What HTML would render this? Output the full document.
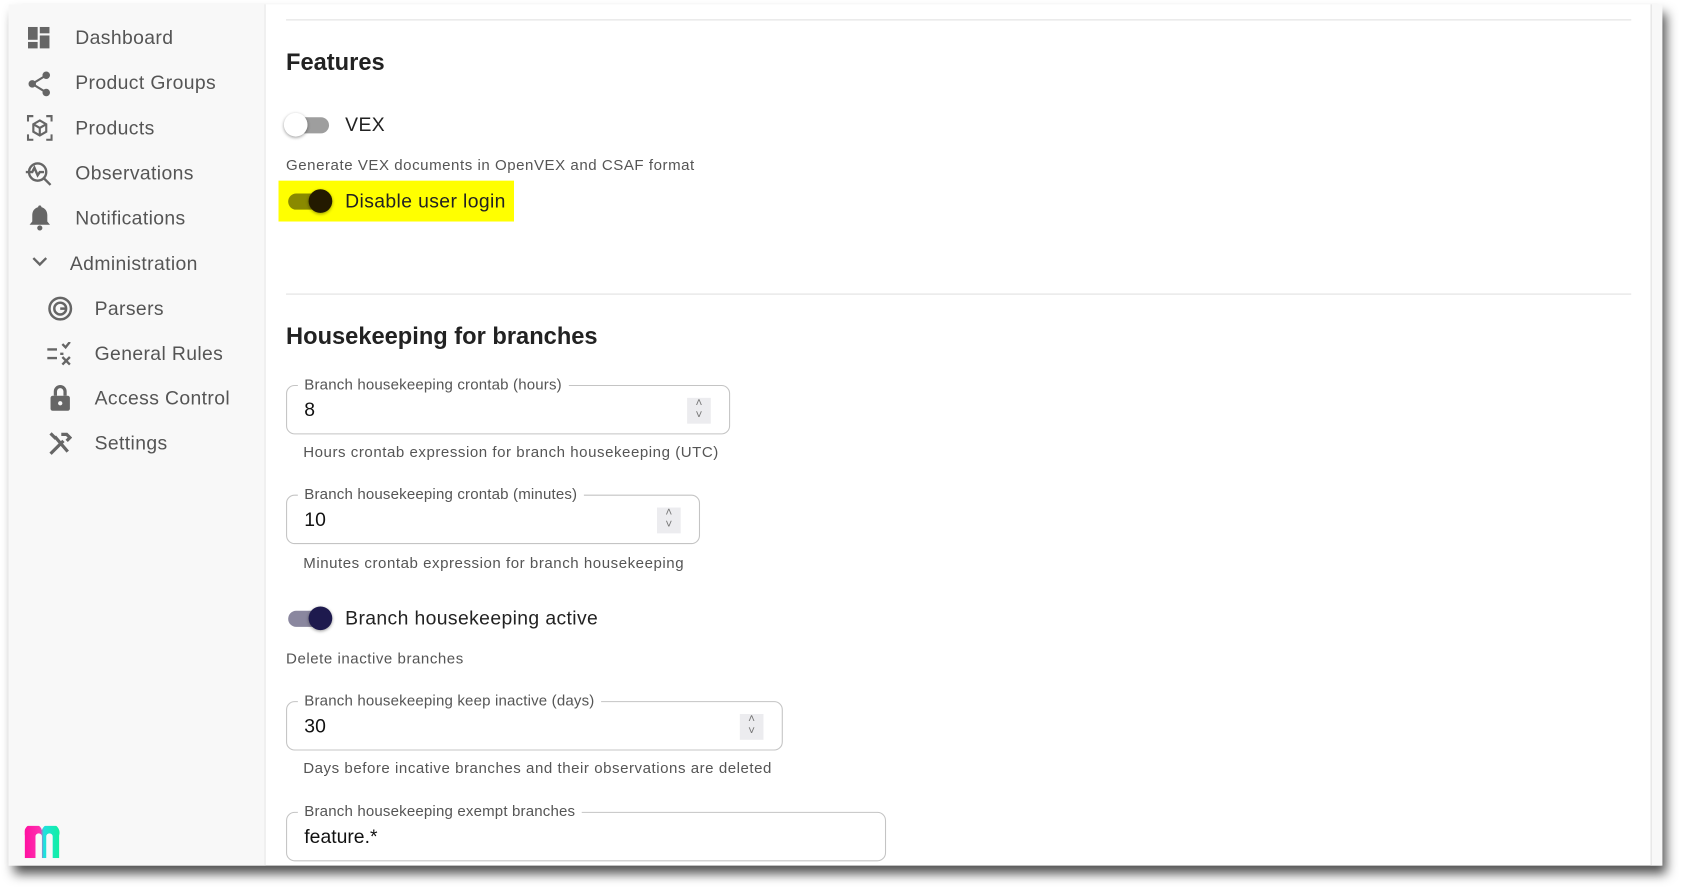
<!DOCTYPE html>
<html><head><style>
html,body{margin:0;padding:0;background:#fff;width:1686px;height:891px;overflow:hidden}
#s{position:absolute;left:0;top:0;width:1568px;height:829px;transform:scale(1.0753);transform-origin:0 0;font-family:"Liberation Sans",sans-serif}
.card{position:absolute;left:8px;top:4px;width:1537px;height:801px;background:#fff;box-shadow:5px 8px 10px rgba(0,0,0,.7)}
.side{position:absolute;left:8px;top:4px;width:238px;height:801px;background:#f8f8f8;border-right:1px solid #e6e6e6}
.rb{position:absolute;left:1535px;top:4px;width:10px;height:801px;background:#f8f8f8;border-left:1px solid #e0e0e0}
.ni{position:absolute;font-size:18px;color:#555;letter-spacing:.35px}
.ic{position:absolute}
.hr{position:absolute;left:266px;width:1251px;height:1px;background:#e0e0e0}
.h{position:absolute;left:266px;font-size:22px;font-weight:bold;color:#222}
.t{position:absolute;font-size:14px;color:#555;letter-spacing:.5px}
.fld{position:absolute;left:266px;height:44px;border:1px solid #c4c4c4;border-radius:8px}
.fld .l{position:absolute;left:10px;top:-10px;background:#fff;padding:0 6px;font-size:14px;color:#555;letter-spacing:.15px}
.fld .v{position:absolute;left:16px;top:12px;font-size:18px;color:#111}
.fld .sp{position:absolute;right:17px;top:11px;width:22px;height:24px;background:#ececef;color:#777;font-size:11px;line-height:11px;text-align:center}
.lbl{position:absolute;font-size:18px;color:#222;letter-spacing:.35px}
</style></head><body><div id="s">
<div class="card"></div><div class="side"></div><div class="rb"></div>
<svg class="ic" style="left:26px;top:25px" width="22" height="22" viewBox="0 0 22 22" fill="#666"><rect x="0" y="0" width="9" height="12"/><rect x="11" y="0" width="9" height="6"/><rect x="11" y="8" width="9" height="12"/><rect x="0" y="14" width="9" height="6"/></svg>
<div class="ni" style="left:70px;top:25px">Dashboard</div>
<svg class="ic" style="left:25px;top:66px" width="24" height="24" viewBox="0 0 24 24" fill="#666"><circle cx="18" cy="4" r="3.5"/><circle cx="5" cy="12" r="3.5"/><circle cx="18" cy="20" r="3.5"/><path d="M18 4L5 12L18 20" stroke="#666" stroke-width="2" fill="none"/></svg>
<div class="ni" style="left:70px;top:67px">Product Groups</div>
<svg class="ic" style="left:25px;top:107px" width="24" height="24" viewBox="0 0 24 24" fill="none" stroke="#666" stroke-width="2"><path d="M1 6V1h5M18 1h5v5M23 18v5h-5M6 23H1v-5"/><path d="M12 5l6 3.5v7L12 19l-6-3.5v-7z"/><path d="M6 8.5l6 3.5 6-3.5M12 12v7"/></svg>
<div class="ni" style="left:70px;top:109px">Products</div>
<svg class="ic" style="left:23px;top:149px" width="26" height="26" viewBox="0 0 26 26" fill="none" stroke="#666" stroke-width="2.2"><circle cx="12" cy="11" r="8"/><path d="M18 17l6 6"/><path d="M1 11h6l2-4 3 7 2-3h4"/></svg>
<div class="ni" style="left:70px;top:151px">Observations</div>
<svg class="ic" style="left:27px;top:191px" width="20" height="24" viewBox="0 0 20 24" fill="#666"><path d="M10 0c1 0 1.5.7 1.5 1.6C15 2.5 17 5.5 17 9v6l2.5 3H.5L3 15V9c0-3.5 2-6.5 5.5-7.4C8.5.7 9 0 10 0z"/><circle cx="10" cy="21" r="2.4"/></svg>
<div class="ni" style="left:70px;top:193px">Notifications</div>
<svg class="ic" style="left:29px;top:238px" width="16" height="12" viewBox="0 0 16 12"><path d="M2 2l6 6 6-6" stroke="#666" stroke-width="2.2" fill="none"/></svg>
<div class="ni" style="left:65px;top:235px">Administration</div>
<svg class="ic" style="left:44px;top:275px" width="24" height="24" viewBox="0 0 24 24" fill="none" stroke="#666" stroke-width="2.3"><circle cx="12" cy="12" r="10"/><circle cx="12" cy="12" r="5.5"/><path d="M12 12h5"/></svg>
<div class="ni" style="left:88px;top:277px">Parsers</div>
<svg class="ic" style="left:43px;top:318px" width="24" height="22" viewBox="0 0 24 22" stroke="#666" stroke-width="2.2" fill="none"><path d="M1 7h9M1 15h9M13 11h3M15 2l3 3 4-5M15 14l7 7M22 14l-7 7"/></svg>
<div class="ni" style="left:88px;top:319px">General Rules</div>
<svg class="ic" style="left:45px;top:357px" width="22" height="26" viewBox="0 0 22 26" fill="#666"><path d="M5 11V7a6 6 0 0112 0v4h-3V7a3 3 0 00-6 0v4z"/><rect x="2" y="11" width="18" height="14" rx="2"/><circle cx="11" cy="18" r="2" fill="#f8f8f8"/></svg>
<div class="ni" style="left:88px;top:360px">Access Control</div>
<svg class="ic" style="left:43px;top:400px" width="24" height="24" viewBox="0 0 24 24" stroke="#666" stroke-width="3" fill="none"><path d="M4 22L16 10M8 6l12 14M4 3l5 5M14 4l5 0 3 3-3 3"/></svg>
<div class="ni" style="left:88px;top:402px">Settings</div>
<svg class="ic" style="left:23px;top:768px" width="33" height="30" viewBox="0 0 33 30"><defs><linearGradient id="g" x1="0" x2="1"><stop offset="0" stop-color="#ff10a0"/><stop offset=".45" stop-color="#ff30b0"/><stop offset=".55" stop-color="#20e0e0"/><stop offset="1" stop-color="#10f0a0"/></linearGradient></defs><path d="M0 30V9a8 8 0 0116-5a8 8 0 0116 5v21h-6V10a3 3 0 00-6 0v20h-4V10a3 3 0 00-6 0v20z" fill="url(#g)"/></svg>
<div class="hr" style="top:18px"></div>
<div class="h" style="top:45px">Features</div>
<div style="position:absolute;left:268px;top:109px;width:38px;height:15px;border-radius:8px;background:#9e9e9e"></div>
<div style="position:absolute;left:264px;top:105px;width:22px;height:22px;border-radius:50%;background:#fff;box-shadow:0 1px 3px rgba(0,0,0,.4)"></div>
<div class="lbl" style="left:321px;top:106px">VEX</div>
<div class="t" style="left:266px;top:145px">Generate VEX documents in OpenVEX and CSAF format</div>
<div style="position:absolute;left:259px;top:168px;width:219px;height:38px;background:#ffff00"></div>
<div style="position:absolute;left:268px;top:180px;width:38px;height:15px;border-radius:8px;background:#8a8a00"></div>
<div style="position:absolute;left:287px;top:176px;width:22px;height:22px;border-radius:50%;background:#231a00;box-shadow:0 1px 3px rgba(0,0,0,.4)"></div>
<div class="lbl" style="left:321px;top:177px">Disable user login</div>
<div class="hr" style="top:273px"></div>
<div class="h" style="top:300px">Housekeeping for branches</div>
<div class="fld" style="top:358px;width:411px"><div class="l">Branch housekeeping crontab (hours)</div><div class="v">8</div><div class="sp">˄<br>˅</div></div>
<div class="t" style="left:282px;top:412px">Hours crontab expression for branch housekeeping (UTC)</div>
<div class="fld" style="top:460px;width:383px"><div class="l">Branch housekeeping crontab (minutes)</div><div class="v">10</div><div class="sp">˄<br>˅</div></div>
<div class="t" style="left:282px;top:515px">Minutes crontab expression for branch housekeeping</div>
<div style="position:absolute;left:268px;top:568px;width:38px;height:15px;border-radius:8px;background:#8a879f"></div>
<div style="position:absolute;left:287px;top:564px;width:22px;height:22px;border-radius:50%;background:#1e1a4e;box-shadow:0 1px 3px rgba(0,0,0,.4)"></div>
<div class="lbl" style="left:321px;top:565px">Branch housekeeping active</div>
<div class="t" style="left:266px;top:604px">Delete inactive branches</div>
<div class="fld" style="top:652px;width:460px"><div class="l">Branch housekeeping keep inactive (days)</div><div class="v">30</div><div class="sp">˄<br>˅</div></div>
<div class="t" style="left:282px;top:706px">Days before incative branches and their observations are deleted</div>
<div class="fld" style="top:755px;width:556px"><div class="l">Branch housekeeping exempt branches</div><div class="v">feature.*</div></div>
</div></body></html>
